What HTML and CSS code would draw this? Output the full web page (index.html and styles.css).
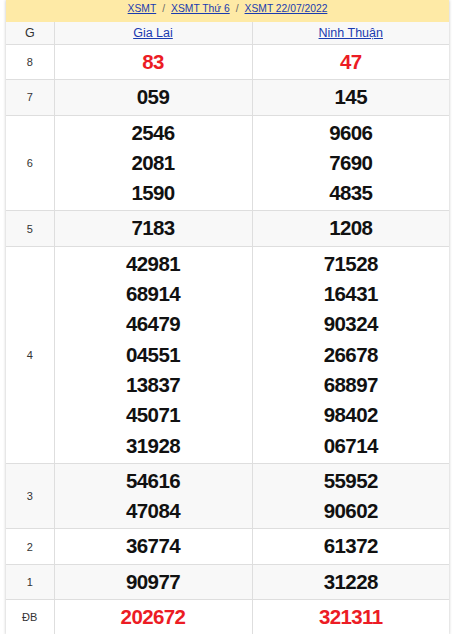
FILE: index.html
```html
<!DOCTYPE html>
<html lang="vi">
<head>
<meta charset="utf-8">
<title>XSMT 22/07/2022</title>
<link rel="stylesheet" href="styles.css">
</head>
<body>
<div class="box">
  <div class="crumb">
    <a href="#">XSMT</a><span class="sep">/</span><a href="#">XSMT Thứ 6</a><span class="sep">/</span><a href="#">XSMT 22/07/2022</a>
  </div>
  <table class="kq">
    <colgroup><col class="c1"><col class="c2"><col class="c3"></colgroup>
    <tr class="alt head"><td class="g">G</td><td><a href="#">Gia Lai</a></td><td><a href="#">Ninh Thuận</a></td></tr>
    <tr><td class="g">8</td><td class="n red"><div>83</div></td><td class="n red"><div>47</div></td></tr>
    <tr class="alt"><td class="g">7</td><td class="n"><div>059</div></td><td class="n"><div>145</div></td></tr>
    <tr><td class="g">6</td><td class="n"><div>2546</div><div>2081</div><div>1590</div></td><td class="n"><div>9606</div><div>7690</div><div>4835</div></td></tr>
    <tr class="alt"><td class="g">5</td><td class="n"><div>7183</div></td><td class="n"><div>1208</div></td></tr>
    <tr><td class="g">4</td><td class="n"><div>42981</div><div>68914</div><div>46479</div><div>04551</div><div>13837</div><div>45071</div><div>31928</div></td><td class="n"><div>71528</div><div>16431</div><div>90324</div><div>26678</div><div>68897</div><div>98402</div><div>06714</div></td></tr>
    <tr class="alt"><td class="g">3</td><td class="n"><div>54616</div><div>47084</div></td><td class="n"><div>55952</div><div>90602</div></td></tr>
    <tr><td class="g">2</td><td class="n"><div>36774</div></td><td class="n"><div>61372</div></td></tr>
    <tr class="alt"><td class="g">1</td><td class="n"><div>90977</div></td><td class="n"><div>31228</div></td></tr>
    <tr><td class="g">ĐB</td><td class="n red"><div>202672</div></td><td class="n red"><div>321311</div></td></tr>
  </table>
</div>
</body>
</html>
```

FILE: styles.css
```css
html, body {
  margin: 0;
  padding: 0;
  background: #fff;
  font-family: "Liberation Sans", Arial, sans-serif;
}
.box {
  margin-left: 6px;
  width: 443px;
  box-shadow: 0 0 3px rgba(0, 0, 0, 0.25);
  background: #fff;
}
.crumb {
  background: #feeaa6;
  height: 22px;
  line-height: 17px;
  text-align: center;
  font-size: 10.3px;
  color: #555;
}
.crumb a {
  color: #1a3bb0;
  text-decoration: underline;
}
.crumb .sep {
  margin: 0 6px;
  color: #666;
}
.kq {
  width: 100%;
  border-collapse: collapse;
  table-layout: fixed;
}
.kq col.c1 { width: 48px; }
.kq col.c2 { width: 198px; }
.kq td {
  border: 1px solid #dedede;
  text-align: center;
  padding: 2px 0;
  vertical-align: middle;
}
.kq tr td:first-child { border-left: none; }
.kq tr td:last-child { border-right: none; }
.kq tr:first-child td { border-top: none; }
.kq tr.alt td { background: #f8f8f8; }
.kq tr.head td {
  height: 18px;
  font-size: 12.5px;
}
.kq tr.head a { color: #1a3bb0; }
.kq td.g {
  font-size: 11px;
  color: #333;
}
.kq td.n div {
  font-size: 20.5px;
  font-weight: bold;
  letter-spacing: -0.6px;
  line-height: 30.3px;
  color: #111;
}
.kq td.red div { color: #ec1c24; }
```
